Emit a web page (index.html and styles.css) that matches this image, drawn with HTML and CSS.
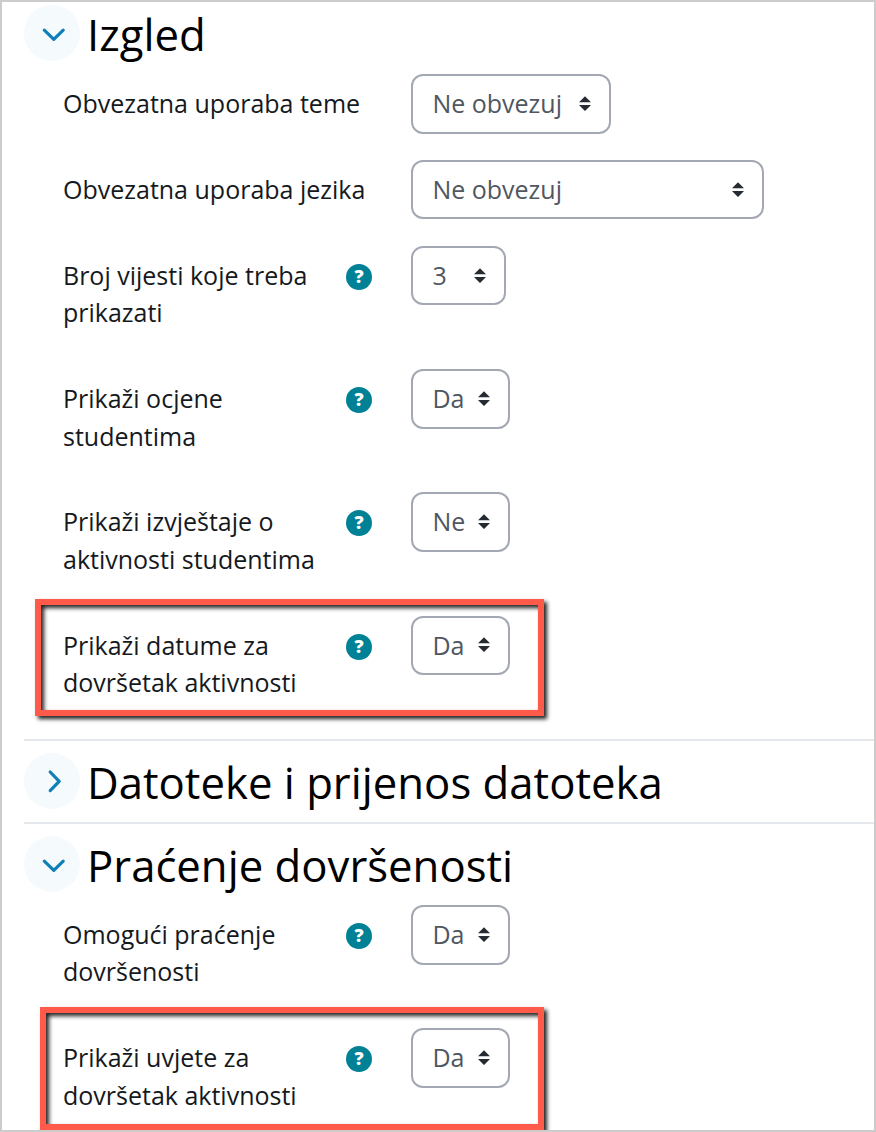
FILE: index.html
```html
<!DOCTYPE html>
<html lang="hr">
<head>
<meta charset="utf-8">
<title>Postavke e-kolegija</title>
<link rel="stylesheet" href="styles.css">
</head>
<body>
<svg class="defs" aria-hidden="true">
  <symbol id="down" viewBox="0 0 56 56"><path d="M20.3 25.2 29.8 34.4 39.2 25.2"/></symbol>
  <symbol id="right" viewBox="0 0 56 56"><path d="M26.2 19 35.2 28.3 26.2 37.6"/></symbol>
  <symbol id="sort" viewBox="0 0 12 16"><path d="M6 0.2 12 6.3H0ZM0 9H12L6 15.1Z"/></symbol>
</svg>
<main class="frame">
  <section class="section">
    <div class="head"><span class="toggle"><svg><use href="#down"/></svg></span><h2>Izgled</h2></div>
    <div class="row"><div class="label">Obvezatna uporaba teme</div><div class="select w-theme">Ne obvezuj<svg><use href="#sort"/></svg></div></div>
    <div class="row"><div class="label">Obvezatna uporaba jezika</div><div class="select w-lang">Ne obvezuj<svg><use href="#sort"/></svg></div></div>
    <div class="row"><div class="label">Broj vijesti koje treba<br>prikazati</div><span class="help">?</span><div class="select w-num">3<svg><use href="#sort"/></svg></div></div>
    <div class="row"><div class="label">Prikaži ocjene<br>studentima</div><span class="help">?</span><div class="select">Da<svg><use href="#sort"/></svg></div></div>
    <div class="row"><div class="label">Prikaži izvještaje o<br>aktivnosti studentima</div><span class="help">?</span><div class="select">Ne<svg><use href="#sort"/></svg></div></div>
    <div class="row"><div class="label">Prikaži datume za<br>dovršetak aktivnosti</div><span class="help">?</span><div class="select">Da<svg><use href="#sort"/></svg></div><div class="mark mark-dates"></div></div>
  </section>
  <section class="section">
    <div class="head"><span class="toggle"><svg><use href="#right"/></svg></span><h2>Datoteke i prijenos datoteka</h2></div>
  </section>
  <section class="section">
    <div class="head"><span class="toggle"><svg><use href="#down"/></svg></span><h2>Praćenje dovršenosti</h2></div>
    <div class="row"><div class="label">Omogući praćenje<br>dovršenosti</div><span class="help">?</span><div class="select">Da<svg><use href="#sort"/></svg></div></div>
    <div class="row"><div class="label">Prikaži uvjete za<br>dovršetak aktivnosti</div><span class="help">?</span><div class="select">Da<svg><use href="#sort"/></svg></div><div class="mark mark-conditions"></div></div>
  </section>
</main>
</body>
</html>
```
FILE: styles.css
```css
* { box-sizing: border-box; }
body {
  margin: 0;
  background: #fff;
  color: #15191d;
  font: 25px/37.4px "Open Sans", sans-serif;
}
.defs { position: absolute; width: 0; height: 0; }
.frame {
  height: 1132px;
  border: 2px solid #ccc;
  padding: 3px 0 0 22px;
  overflow: hidden;
}
.section + .section { border-top: 2px solid #e4e7eb; padding-top: 12px; }
.head { display: flex; align-items: center; gap: 7px; height: 56px; margin-bottom: 13px; }
.toggle { flex: none; width: 56px; height: 56px; border-radius: 50%; background: #f5fafd; }
.toggle svg {
  display: block;
  width: 56px;
  height: 56px;
  fill: none;
  stroke: #0f7fb8;
  stroke-width: 3.2;
  stroke-linecap: round;
  stroke-linejoin: round;
}
h2 { margin: 2px 0 0; color: #000; font-size: 43.7px; font-weight: 400; line-height: 56px; white-space: nowrap; }
.row {
  position: relative;
  display: grid;
  grid-template-columns: 282px 66.4px max-content;
  align-items: start;
  padding-left: 39px;
  margin-bottom: 26.3px;
}
.label { grid-column: 1; padding: 11.1px 0; white-space: nowrap; }
.help {
  grid-column: 2;
  width: 26px;
  height: 26px;
  margin: 18px 0 0 1px;
  border-radius: 50%;
  background: #008196;
  color: #fff;
  font-size: 18px;
  font-weight: 800;
  line-height: 25px;
  text-align: center;
}
.select {
  grid-column: 3;
  display: flex;
  align-items: center;
  justify-content: space-between;
  width: 98.6px;
  height: 59.6px;
  padding: 0 18px 0 19px;
  border: 2px solid #a3a8b3;
  border-radius: 12px;
  color: #505761;
}
.select svg { width: 12px; height: 16px; fill: #252b31; }
.w-theme { width: 200px; }
.w-lang { width: 353px; }
.w-num { width: 95px; }
.row:has(.w-theme), .row:has(.w-lang) { height: 59.6px; }
.mark {
  position: absolute;
  border: 6px solid #ff5a4a;
  box-shadow: 3px 3px 4px #222, inset 3px 3px 4px #222;
}
.mark-dates { left: 11px; top: -17px; width: 509px; height: 117px; }
.mark-conditions { left: 16px; top: -21.5px; width: 504px; height: 123px; }
```
